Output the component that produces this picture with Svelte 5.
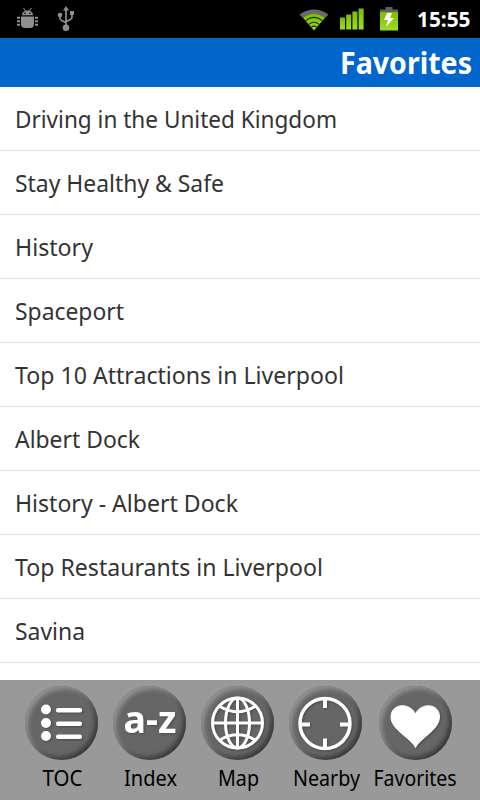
<script>
  const items = [
    { title: "Driving in the United Kingdom", width: 322 },
    { title: "Stay Healthy & Safe", width: 209 },
    { title: "History", width: 78 },
    { title: "Spaceport", width: 109 },
    { title: "Top 10 Attractions in Liverpool", width: 329 },
    { title: "Albert Dock", width: 125 },
    { title: "History - Albert Dock", width: 223 },
    { title: "Top Restaurants in Liverpool", width: 308 },
    { title: "Savina", width: 70 },
  ];

  const tabs = [
    { icon: "toc", label: "TOC", width: 40, center: 49.5 },
    { icon: "index", label: "Index", width: 53, center: 49.5 },
    { icon: "map", label: "Map", width: 41, center: 49.5 },
    { icon: "nearby", label: "Nearby", width: 67, center: 49.5 },
    { icon: "heart", label: "Favorites", width: 83, center: 48 },
  ];
</script>

<div class="screen">
  <div class="status">
    <svg class="debug" width="22" height="22" viewBox="0 0 22 22" fill="#8f8f8f">
      <path d="M5 7.2C5 4.5 7.3 2.5 10.5 2.5S16 4.5 16 7.2z" />
      <path d="M6.5 0l2 3M14.5 0l-2 3" stroke="#8f8f8f" />
      <path d="M4 8.5h13v7.5q0 4-4 4H8q-4 0-4-4z" />
      <path d="M0 9.7h3M0 13.2h3M0 16.7h3M18 9.7h3M18 13.2h3M18 16.7h3" stroke="#8f8f8f" stroke-width="2" />
      <circle cx="8" cy="5.3" r=".8" fill="#000" />
      <circle cx="13" cy="5.3" r=".8" fill="#000" />
    </svg>
    <svg class="usb" width="18" height="26" viewBox="0 0 18 26" fill="#8f8f8f">
      <path d="M9 21V3M3 9v3q0 2 2 2.7l4 1.8M15 7v4q0 2-2 2.7l-4 1.8" fill="none" stroke="#8f8f8f" stroke-width="1.7" />
      <path d="M9 0l3 4.5H6z" />
      <circle cx="3" cy="9" r="2.3" />
      <rect x="13" y="5" width="4" height="4" />
      <circle cx="9" cy="21.8" r="3.3" />
    </svg>
    <span class="spacer"></span>
    <svg class="wifi" width="30" height="24" viewBox="0 0 30 24">
      <path d="M.5 6.5Q15-3.5 29.5 6.5L26 10Q15 2 4 10z" fill="#6a6a6a" />
      <path d="M4 9.8Q15 1.5 26 9.8L15 22.5z" fill="url(#green)" />
      <path d="M6.7 12.6Q15 6 23.3 12.6M10 16.3Q15 12.2 20 16.3M12.3 19.3Q15 17 17.7 19.3" fill="none" stroke="#1c3000" stroke-width="1.2" />
    </svg>
    <svg class="signal" width="24" height="22" viewBox="0 0 24 22">
      <defs>
        <linearGradient id="green" x1="0" y1="0" x2="0" y2="1">
          <stop offset="0" stop-color="#7ebc00" />
          <stop offset="1" stop-color="#9bdc28" />
        </linearGradient>
      </defs>
      <g fill="url(#green)">
        <rect y="9.5" width="5" height="12" />
        <rect x="6.2" y="6.5" width="5" height="15" />
        <rect x="12.4" y="3.5" width="5" height="18" />
        <rect x="18.6" y=".5" width="5" height="21" />
      </g>
    </svg>
    <svg class="battery" width="18" height="24" viewBox="0 0 18 24">
      <path d="M5.5 0h7v2.5H18V7H0V2.5h5.5z" fill="#606060" />
      <rect y="5" width="18" height="18.5" fill="url(#green)" />
      <path d="M7 6h5l-2 5h4L6 20l2-7H4z" fill="#fff" />
    </svg>
    <svg class="clock" width="63" height="30">
      <text x="0" y="18" textLength="53.5" lengthAdjust="spacingAndGlyphs">15:55</text>
    </svg>
  </div>

  <header>
    <svg width="140" height="49">
      <text x="0" y="36" textLength="132" lengthAdjust="spacingAndGlyphs">Favorites</text>
    </svg>
  </header>

  <ul>
    {#each items as item}
      <li>
        <svg width="400" height="63">
          <text x="0" y="41" textLength={item.width} lengthAdjust="spacingAndGlyphs">{item.title}</text>
        </svg>
      </li>
    {/each}
  </ul>

  <nav>
    {#each tabs as tab}
      <div class="tab">
        <div class="disc">
          <svg class="icon" width="73" height="74" viewBox="0 0 73 74">
            {#if tab.icon === "toc"}
              <g fill="#fff">
                {#each [23.5, 37, 50] as y}
                  <circle cx="21" cy={y} r="5" />
                  <rect x="31" y={y - 1.5} width="26" height="4.6" rx="2" />
                {/each}
              </g>
            {:else if tab.icon === "index"}
              <text x="10.5" y="47" textLength="53" lengthAdjust="spacingAndGlyphs">a-z</text>
            {:else if tab.icon === "map"}
              <g fill="none" stroke="#fff" stroke-width="3">
                <circle cx="36.5" cy="37" r="25" />
                <ellipse cx="36.5" cy="37" rx="12" ry="25" />
                <path d="M36.5 12v50M11.5 37h50M19 20.5Q36.5 31 54 20.5M19 54Q36.5 43.5 54 54" />
              </g>
            {:else if tab.icon === "nearby"}
              <g fill="none" stroke="#fff" stroke-width="3.5">
                <circle cx="36" cy="37.5" r="25" />
                <path d="M36 12v10M36 63V52.5M11 38.5h10M61 38.5H51" stroke-width="4" />
              </g>
            {:else}
              <path d="M36.5 61.5C32 52 12 44 12 31C12 17 31 16 36.5 28C42 16 60.5 17 60.5 31C60.5 44 41 52 36.5 61.5z" fill="#fff" stroke="#fff" />
            {/if}
          </svg>
        </div>
        <svg class="label" width="96" height="40">
          <text x={tab.center - tab.width / 2} y="26" textLength={tab.width} lengthAdjust="spacingAndGlyphs">{tab.label}</text>
        </svg>
      </div>
    {/each}
  </nav>
</div>

<style>
  :global(body) {
    background: #fff;
  }

  .screen {
    display: flex;
    flex-direction: column;
    width: 480px;
    height: 800px;
    overflow: hidden;
    font-family: "Noto Sans", "Open Sans", sans-serif;
  }

  svg {
    display: block;
    flex-shrink: 0;
    overflow: visible;
  }

  .status {
    display: flex;
    align-items: flex-start;
    box-sizing: border-box;
    height: 38px;
    padding: 6px 0 0 17px;
    background: #000;
  }

  .debug {
    margin-top: 2px;
  }

  .usb {
    margin-left: 18px;
  }

  .spacer {
    flex: 1;
  }

  .wifi {
    margin-top: 2px;
  }

  .signal {
    margin: 2px 0 0 11px;
  }

  .battery {
    margin: 1px 0 0 16px;
  }

  .clock {
    margin: 3px 0 0 19px;
    fill: #fff;
    font-size: 21px;
    font-weight: bold;
  }

  header {
    display: flex;
    justify-content: flex-end;
    height: 49px;
    background: #0066cc;
    fill: #fff;
    font-size: 31px;
    font-weight: bold;
  }

  ul {
    flex: 1;
    margin: 0;
    padding: 0;
    list-style: none;
    fill: #333;
    font-size: 24px;
  }

  li {
    height: 63px;
    padding-left: 15px;
    border-bottom: 1px solid #e0e0e0;
  }

  nav {
    display: flex;
    box-sizing: border-box;
    height: 120px;
    padding: 6px 0 0 17px;
    background: #999;
  }

  .tab {
    display: flex;
    flex-direction: column;
    align-items: center;
    width: 88px;
  }

  .tab:last-child {
    width: 92px;
  }

  .disc {
    width: 73px;
    height: 74px;
    border-radius: 50%;
    background: #666;
    box-shadow:
      inset 3px 3px 4px #919191,
      inset -3px -3px 4px #3c3c3c;
  }

  .icon {
    fill: #fff;
    font-size: 37px;
    font-weight: bold;
    filter: drop-shadow(1px 1px 1px #3338);
  }

  .label {
    fill: #000;
    font-size: 22px;
  }
</style>
